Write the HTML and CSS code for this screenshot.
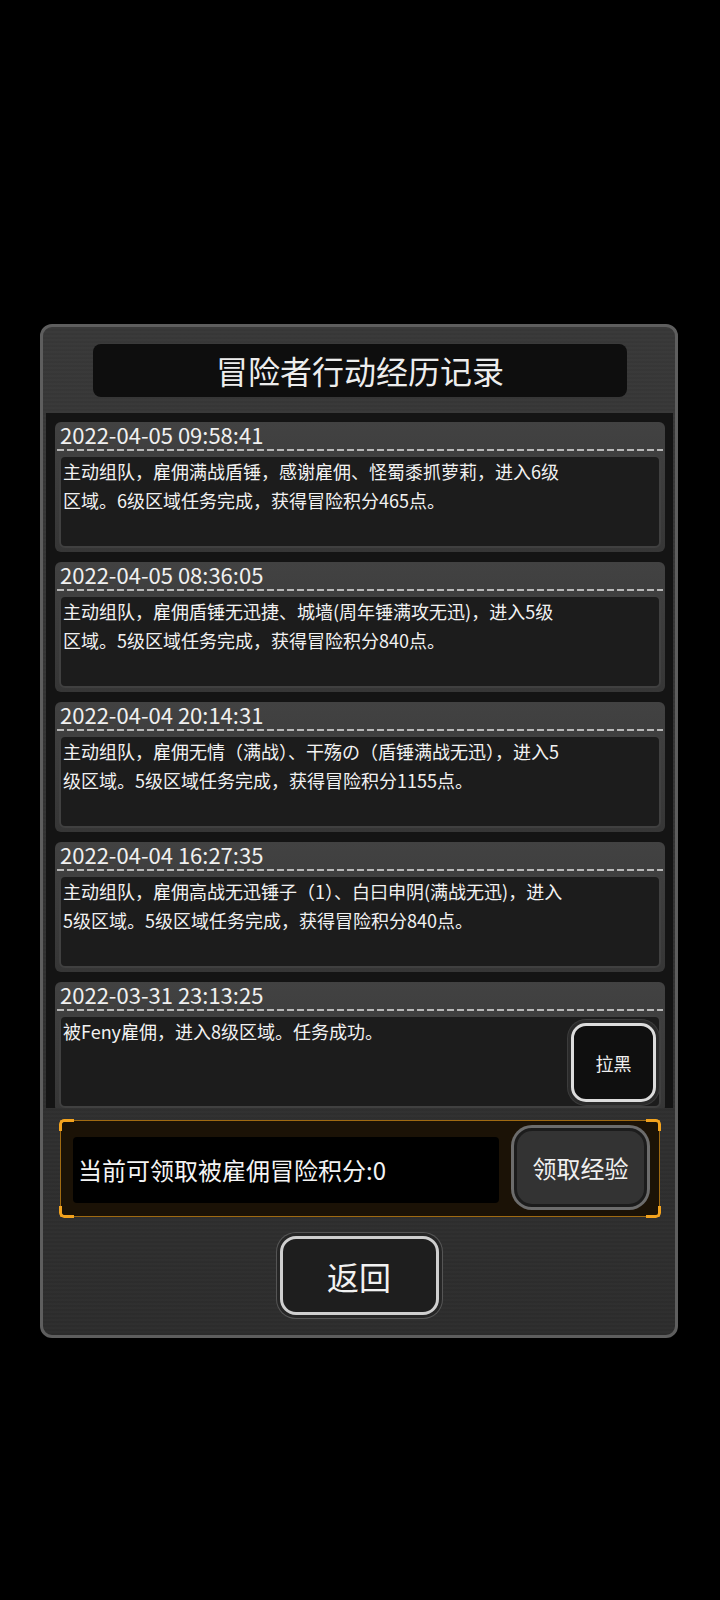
FILE: index.html
```html
<!DOCTYPE html>
<html lang="zh-CN">
<head>
  <meta charset="UTF-8" />
  <meta name="viewport" content="width=device-width, initial-scale=1" />
  <title>冒险者行动经历记录</title>
  <link rel="stylesheet" href="styles.css">
</head>
<body>

  <div class="painel">
    <div class="titulo">冒险者行动经历记录</div>

    <div class="lista">
      <div class="registro">
        <div class="data">2022-04-05 09:58:41</div>
        <div class="tracejado"></div>
        <div class="conteudo">
          <p>主动组队，雇佣满战盾锤，感谢雇佣、怪蜀黍抓萝莉，进入6级<br>区域。6级区域任务完成，获得冒险积分465点。</p>
        </div>
      </div>

      <div class="registro">
        <div class="data">2022-04-05 08:36:05</div>
        <div class="tracejado"></div>
        <div class="conteudo">
          <p>主动组队，雇佣盾锤无迅捷、城墙(周年锤满攻无迅)，进入5级<br>区域。5级区域任务完成，获得冒险积分840点。</p>
        </div>
      </div>

      <div class="registro">
        <div class="data">2022-04-04 20:14:31</div>
        <div class="tracejado"></div>
        <div class="conteudo">
          <p>主动组队，雇佣无情（满战）、干殇の（盾锤满战无迅），进入5<br>级区域。5级区域任务完成，获得冒险积分1155点。</p>
        </div>
      </div>

      <div class="registro">
        <div class="data">2022-04-04 16:27:35</div>
        <div class="tracejado"></div>
        <div class="conteudo">
          <p>主动组队，雇佣高战无迅锤子（1）、白曰申阴(满战无迅)，进入<br>5级区域。5级区域任务完成，获得冒险积分840点。</p>
        </div>
      </div>

      <div class="registro">
        <div class="data">2022-03-31 23:13:25</div>
        <div class="tracejado"></div>
        <div class="conteudo">
          <p>被Feny雇佣，进入8级区域。任务成功。</p>
          <button class="btn-bloquear">拉黑</button>
        </div>
      </div>
    </div>

    <div class="resgate">
      <div class="saldo">当前可领取被雇佣冒险积分:0</div>
      <button class="btn-resgatar">领取经验</button>
    </div>

    <button class="btn-voltar">返回</button>
  </div>

</body>
</html>
```

FILE: styles.css
```css
body {
  margin: 0;
  background: #000;
  font-family: "Noto Sans CJK SC", "Noto Sans", sans-serif;
  color: #ececec;
}
.painel {
  box-sizing: border-box;
  width: 638px;
  height: 1014px;
  margin: 324px 0 0 40px;
  border: 3px solid #5e5e5e;
  border-radius: 12px;
  background:
    repeating-linear-gradient(180deg, rgba(255,255,255,0.015) 0 2px, transparent 2px 4px),
    linear-gradient(180deg, #373737, #2c2c2c);
  display: flex;
  flex-direction: column;
}
.titulo {
  height: 53px;
  margin: 17px 48px 0 50px;
  background: #0e0e0e;
  border-radius: 8px;
  font-size: 32px;
  line-height: 53px;
  text-align: center;
  color: #ededed;
}
.lista {
  height: 695px;
  margin: 16px 2px 0 3px;
  padding: 9px 8px 0 9px;
  box-sizing: border-box;
  background: #141414;
  overflow: hidden;
  display: flex;
  flex-direction: column;
  gap: 10px;
}
.registro {
  flex-shrink: 0;
  height: 130px;
  box-sizing: border-box;
  padding: 0 4px 4px;
  background: linear-gradient(180deg, #424242, #363636);
  border-radius: 6px;
  display: flex;
  flex-direction: column;
}
.data {
  height: 25px;
  line-height: 25px;
  padding-left: 1px;
  font-size: 22px;
  color: #f0f0f0;
}
.tracejado {
  height: 2px;
  margin: 2px -2px 4px;
  background: repeating-linear-gradient(90deg, #b8b8b8 0 7px, transparent 7px 10px);
}
.conteudo {
  flex: 1;
  display: flex;
  align-items: flex-start;
  background: #1c1c1c;
  border: 2px solid #404040;
  border-radius: 6px;
}
.conteudo p {
  flex: 1;
  margin: 0;
  padding: 0 2px;
  font-size: 18px;
  line-height: 29px;
  color: #f2f2f2;
}
.btn-bloquear {
  width: 85px;
  height: 79px;
  margin: 6px 3px 0 0;
  box-sizing: border-box;
  background: #0f0f0f;
  border: 3px solid #dcdcdc;
  border-radius: 15px;
  box-shadow: 0 0 0 3px #2a2a2a, 0 0 0 4px #3c3c3c;
  font-family: inherit;
  font-size: 18px;
  color: #f0f0f0;
}
.resgate {
  position: relative;
  height: 97px;
  margin: 12px 15px 0 17px;
  box-sizing: border-box;
  padding: 0 12px 0 12px;
  background: #1b1206;
  border: 1px solid #a06a12;
  display: flex;
  align-items: center;
  gap: 15px;
}
.resgate::before,
.resgate::after {
  content: "";
  position: absolute;
  top: -2px;
  bottom: -2px;
  width: 12px;
  border: 3px solid #f2a21e;
  -webkit-mask: linear-gradient(#000 0 12px, transparent 12px calc(100% - 12px), #000 calc(100% - 12px));
  mask: linear-gradient(#000 0 12px, transparent 12px calc(100% - 12px), #000 calc(100% - 12px));
}
.resgate::before {
  left: -2px;
  border-right: none;
  border-radius: 5px 0 0 5px;
}
.resgate::after {
  right: -2px;
  border-left: none;
  border-radius: 0 5px 5px 0;
}
.saldo {
  flex: 1;
  height: 66px;
  margin-top: 2px;
  padding-left: 5px;
  background: #000;
  border-radius: 4px;
  font-size: 24px;
  line-height: 66px;
  color: #f4f4f4;
}
.btn-resgatar {
  position: relative;
  z-index: 1;
  width: 133px;
  height: 79px;
  margin-top: -2px;
  box-sizing: border-box;
  background: #333;
  border: 3px solid #1c1c1c;
  border-radius: 18px;
  box-shadow: 0 0 0 3px #6c6c6c;
  font-family: inherit;
  font-size: 24px;
  color: #f0f0f0;
}
.btn-voltar {
  align-self: center;
  width: 159px;
  height: 79px;
  margin-top: 19px;
  box-sizing: border-box;
  background: #1e1e1e;
  border: 3px solid #cfcfcf;
  border-radius: 16px;
  box-shadow: 0 0 0 3px #262626, 0 0 0 4px #555;
  font-family: inherit;
  font-size: 32px;
  color: #f2f2f2;
}
```
